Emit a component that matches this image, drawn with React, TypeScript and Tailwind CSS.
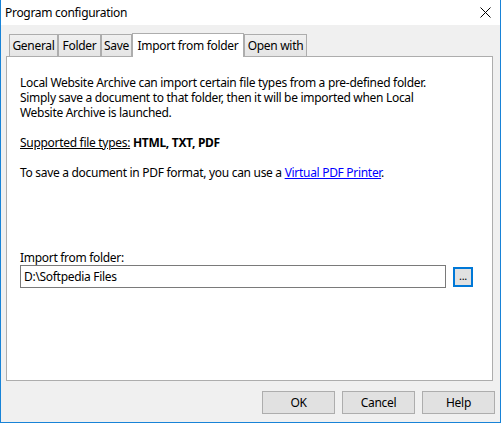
import React from 'react';

const tabs = [
  { label: 'General', w: 'w-[49px]' },
  { label: 'Folder', w: 'w-[43px]' },
  { label: 'Save', w: 'w-[31px]' },
  { label: 'Import from folder', w: 'w-[112px]', active: true },
  { label: 'Open with', w: 'w-[63px]' },
];

export default function App() {
  return (
    <div
      className="w-[501px] h-[423px] flex flex-col bg-[#f0f0f0] border-x border-b border-[#1883d7] text-[12px] leading-[15px] tracking-[-0.3px] text-black"
      style={{ fontFamily: '"Noto Sans", "Liberation Sans", sans-serif' }}
    >
      {/* title bar */}
      <div className="h-[25px] bg-white flex items-center justify-between pl-[4px] pr-[9px]">
        <span>Program configuration</span>
        <svg width="11" height="11" viewBox="0 0 11 11">
          <path d="M0.5 0.5 L10.5 10.5 M10.5 0.5 L0.5 10.5" stroke="#000" strokeWidth="1" />
        </svg>
      </div>

      {/* tabs */}
      <div className="mt-[7px] ml-[8px] flex items-end h-[24px]">
        {tabs.map((t) =>
          t.active ? (
            <div
              key={t.label}
              className={`${t.w} h-[24px] -mb-px relative z-10 bg-white border border-b-0 border-[#adadad] flex items-center justify-center`}
            >
              {t.label}
            </div>
          ) : (
            <div
              key={t.label}
              className={`${t.w} h-[22px] bg-gradient-to-b from-[#f0f0f0] to-[#e5e5e5] border border-b-0 border-[#adadad] flex items-center justify-center`}
            >
              {t.label}
            </div>
          )
        )}
      </div>

      {/* panel */}
      <div className="ml-[5px] w-[487px] h-[325px] bg-white border border-[#adadad] pl-[13px] pt-[18px] flex flex-col">
        <p>
          Local Website Archive can import certain file types from a pre-defined folder.
          <br />
          Simply save a document to that folder, then it will be imported when Local
          <br />
          Website Archive is launched.
        </p>
        <p className="mt-[15px]">
          <span className="underline">Supported file types:</span> <span className="font-bold">HTML, TXT, PDF</span>
        </p>
        <p className="mt-[15px]">
          To save a document in PDF format, you can use a{' '}
          <span className="text-[#0000ff] underline">Virtual PDF Printer</span>.
        </p>

        <div className="mt-[70px]">Import from folder:</div>
        <div className="flex items-center">
          <div className="w-[426px] h-[23px] border border-[#7a7a7a] bg-white flex items-center pl-[3px]">
            D:\Softpedia Files
          </div>
          <div className="ml-[7px] w-[20px] h-[20px] border-2 border-[#0078d7] bg-[#e1e1e1] flex items-center justify-center text-[11px] leading-none pb-[2px]">
            ...
          </div>
        </div>
      </div>

      {/* buttons */}
      <div className="mt-[10px] flex justify-end gap-[7px] pr-[5px]">
        {['OK', 'Cancel', 'Help'].map((b) => (
          <div
            key={b}
            className="w-[73px] h-[23px] bg-[#e1e1e1] border border-[#adadad] flex items-center justify-center"
          >
            {b}
          </div>
        ))}
      </div>
    </div>
  );
}
